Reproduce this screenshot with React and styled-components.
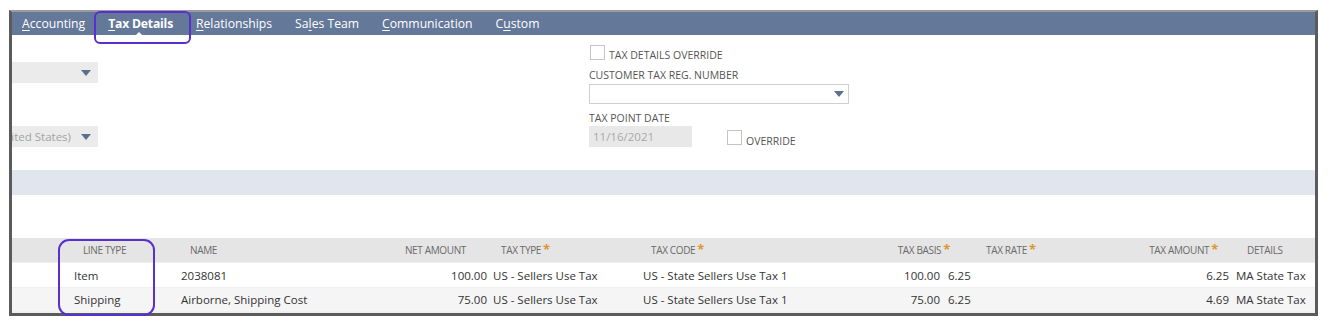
import React from "react";
import styled, { createGlobalStyle } from "styled-components";

const GlobalStyle = createGlobalStyle`
  body {
    margin: 0;
    background: #ffffff;
    font-family: "Open Sans", "Liberation Sans", sans-serif;
  }
`;

const tabs = [
  { pre: "", key: "A", post: "ccounting" },
  { pre: "", key: "T", post: "ax Details", active: true },
  { pre: "", key: "R", post: "elationships" },
  { pre: "Sa", key: "l", post: "es Team" },
  { pre: "", key: "C", post: "ommunication" },
  { pre: "C", key: "u", post: "stom" },
];

const columns = [
  { width: 52, label: "" },
  { width: 107, label: "LINE TYPE", head: "0 0 0 19px", cell: "0 0 0 10px" },
  { width: 219, label: "NAME", head: "0 0 0 19px", cell: "0 0 0 10px" },
  { width: 100, label: "NET AMOUNT", right: true, head: "0 24px 0 0", cell: "0 3px 0 0" },
  { width: 150, label: "TAX TYPE", star: true, head: "0 0 0 11px", cell: "0 0 0 3px" },
  { width: 220, label: "TAX CODE", star: true, head: "0 0 0 11px", cell: "0 0 0 3px" },
  { width: 85, label: "TAX BASIS", star: true, right: true, head: "0 0 0 0", cell: "0 5px 0 0", tight: true },
  { width: 185, label: "TAX RATE", star: true, head: "0 0 0 41px", cell: "0 0 0 3px" },
  { width: 102, label: "TAX AMOUNT", star: true, right: true, head: "0 14px 0 0", cell: "0 3px 0 0" },
  { width: 83, label: "DETAILS", head: "0 0 0 15px", cell: "0 0 0 4px" },
];

const rows = [
  ["", "Item", "2038081", "100.00", "US - Sellers Use Tax", "US - State Sellers Use Tax 1", "100.00", "6.25", "6.25", "MA State Tax"],
  ["", "Shipping", "Airborne, Shipping Cost", "75.00", "US - Sellers Use Tax", "US - State Sellers Use Tax 1", "75.00", "6.25", "4.69", "MA State Tax"],
];

const Arrow = ({ color = "#5b6f8f" }) => (
  <svg width="10" height="6" viewBox="0 0 10 6">
    <path d="M0 0 H10 L5 6 Z" fill={color} />
  </svg>
);

export default function App() {
  return (
    <Page>
      <GlobalStyle />
      <Frame>
        <TabBar>
          {tabs.map((t) => (
            <Tab key={t.post} $active={t.active}>
              {t.pre}
              <u>{t.key}</u>
              {t.post}
              {t.active && <Pointer />}
            </Tab>
          ))}
        </TabBar>

        <FormArea>
          <LeftCol>
            <GraySelect>
              <SelectText />
              <Arrow />
            </GraySelect>
            <GraySelect>
              <SelectText>(United States)</SelectText>
              <Arrow />
            </GraySelect>
          </LeftCol>

          <RightCol>
            <CheckRow>
              <Box />
              <CheckLabel>TAX DETAILS OVERRIDE</CheckLabel>
            </CheckRow>
            <FieldLabel $top={8}>CUSTOMER TAX REG. NUMBER</FieldLabel>
            <WhiteSelect>
              <Arrow />
            </WhiteSelect>
            <FieldLabel $top={7}>TAX POINT DATE</FieldLabel>
            <DateRow>
              <DateField>11/16/2021</DateField>
              <Box $offset={4} />
              <CheckLabel $pad={8}>OVERRIDE</CheckLabel>
            </DateRow>
          </RightCol>
        </FormArea>

        <Band />
        <Gap />

        <Grid>
          {columns.map((c, i) => (
            <HeadCell key={"h" + i} $right={c.right} $pad={c.head} $tight={c.tight}>
              {c.label}
              {c.star && <Star>*</Star>}
            </HeadCell>
          ))}
          {rows.map((r, ri) =>
            r.map((v, ci) => (
              <Cell
                key={ri + "-" + ci}
                $alt={ri % 2 === 1}
                $right={columns[ci].right}
                $pad={columns[ci].cell}
              >
                {v}
              </Cell>
            ))
          )}
        </Grid>

        <Highlight style={{ left: 82, top: -1, width: 97, height: 33 }} $radius={6} />
        <Highlight style={{ left: 46, top: 227, width: 97, height: 77 }} $radius={11} />
      </Frame>
    </Page>
  );
}

const Page = styled.div`
  padding: 10px 0 0 9px;
  height: 318px;
`;

const Frame = styled.div`
  position: relative;
  width: 1303px;
  border: 3px solid #5b5b5b;
  border-top: 2px solid #9b9b9b;
  box-sizing: content-box;
`;

const TabBar = styled.div`
  display: flex;
  align-items: center;
  height: 23px;
  background: #64789a;
`;

const Tab = styled.div`
  position: relative;
  padding: 0 11.5px;
  color: #ffffff;
  font-size: 12.2px;
  font-weight: ${(p) => (p.$active ? 700 : 400)};
  line-height: 24px;
  white-space: nowrap;
  letter-spacing: ${(p) => (p.$active ? "-0.2px" : "0")};

  &:first-child {
    padding-left: 10px;
  }

  u {
    text-underline-offset: 2px;
  }
`;

const Pointer = styled.span`
  position: absolute;
  left: 50%;
  bottom: 0;
  margin-left: -6px;
  width: 0;
  height: 0;
  border-left: 4px solid transparent;
  border-right: 4px solid transparent;
  border-bottom: 4px solid #ffffff;
`;

const FormArea = styled.div`
  display: flex;
  height: 135px;
`;

const LeftCol = styled.div`
  display: flex;
  flex-direction: column;
  gap: 43px;
  width: 86px;
  padding-top: 27px;
`;

const GraySelect = styled.div`
  display: flex;
  align-items: center;
  height: 21px;
  padding-right: 7px;
  background: #ebebeb;
  overflow: hidden;
`;

const SelectText = styled.div`
  flex: 1;
  display: flex;
  justify-content: flex-end;
  padding-right: 10px;
  overflow: hidden;
  white-space: nowrap;
  color: #a3a3a3;
  font-size: 11.5px;
`;

const RightCol = styled.div`
  display: flex;
  flex-direction: column;
  margin-left: 491px;
  padding-top: 10px;
`;

const CheckRow = styled.div`
  display: flex;
  align-items: flex-start;
  height: 15px;
`;

const Box = styled.span`
  display: block;
  width: 13px;
  height: 13px;
  margin-left: 1px;
  margin-top: ${(p) => p.$offset || 0}px;
  border: 1px solid #c4c4c4;
  background: #ffffff;
  flex: none;
`;

const CheckLabel = styled.span`
  margin-left: 4px;
  padding-top: ${(p) => p.$pad || 3}px;
  color: #555555;
  font-size: 10.5px;
  line-height: 14px;
  white-space: nowrap;
`;

const FieldLabel = styled.div`
  margin-top: ${(p) => p.$top}px;
  color: #555555;
  font-size: 10.5px;
  line-height: 14px;
  white-space: nowrap;
`;

const WhiteSelect = styled.div`
  display: flex;
  align-items: center;
  justify-content: flex-end;
  width: 260px;
  height: 20px;
  margin-top: 2px;
  padding-right: 4px;
  box-sizing: border-box;
  border: 1px solid #cfcfcf;
  background: #ffffff;
`;

const DateRow = styled.div`
  display: flex;
  align-items: flex-start;
  margin-top: 1px;
`;

const DateField = styled.div`
  width: 103px;
  height: 21px;
  margin-right: 34px;
  padding-left: 4px;
  box-sizing: border-box;
  background: #e8e8e8;
  color: #a8a8a8;
  font-size: 11.5px;
  line-height: 21px;
`;

const Band = styled.div`
  height: 25px;
  background: #e1e6ee;
`;

const Gap = styled.div`
  height: 43px;
`;

const Grid = styled.div`
  display: grid;
  grid-template-columns: ${columns.map((c) => c.width + "px").join(" ")};
  grid-template-rows: 24px 25px 24px;
  background: linear-gradient(#e5e5e5 0 24px, transparent 24px);
  border-bottom: 2px solid #f0f0f0;
`;

const HeadCell = styled.div`
  display: flex;
  align-items: center;
  justify-content: ${(p) => (p.$right ? "flex-end" : "flex-start")};
  padding: ${(p) => p.$pad || 0};
  margin-right: ${(p) => (p.$tight ? "-5px" : 0)};
  color: #6a6a6a;
  font-size: 10px;
  letter-spacing: -0.35px;
  white-space: nowrap;
`;

const Star = styled.span`
  margin-left: 2px;
  color: #e0952a;
  font-size: 13px;
  font-weight: 700;
  line-height: 10px;
  align-self: flex-start;
  margin-top: 6px;
`;

const Cell = styled.div`
  display: flex;
  align-items: center;
  justify-content: ${(p) => (p.$right ? "flex-end" : "flex-start")};
  padding: ${(p) => p.$pad || 0};
  background: ${(p) => (p.$alt ? "#f5f5f5" : "#ffffff")};
  border-top: 1px solid #efefef;
  color: #333333;
  font-size: 11.5px;
  white-space: nowrap;
`;

const Highlight = styled.div`
  position: absolute;
  box-sizing: border-box;
  border: 2px solid #5a2fd0;
  border-radius: ${(p) => p.$radius}px;
  pointer-events: none;
`;
